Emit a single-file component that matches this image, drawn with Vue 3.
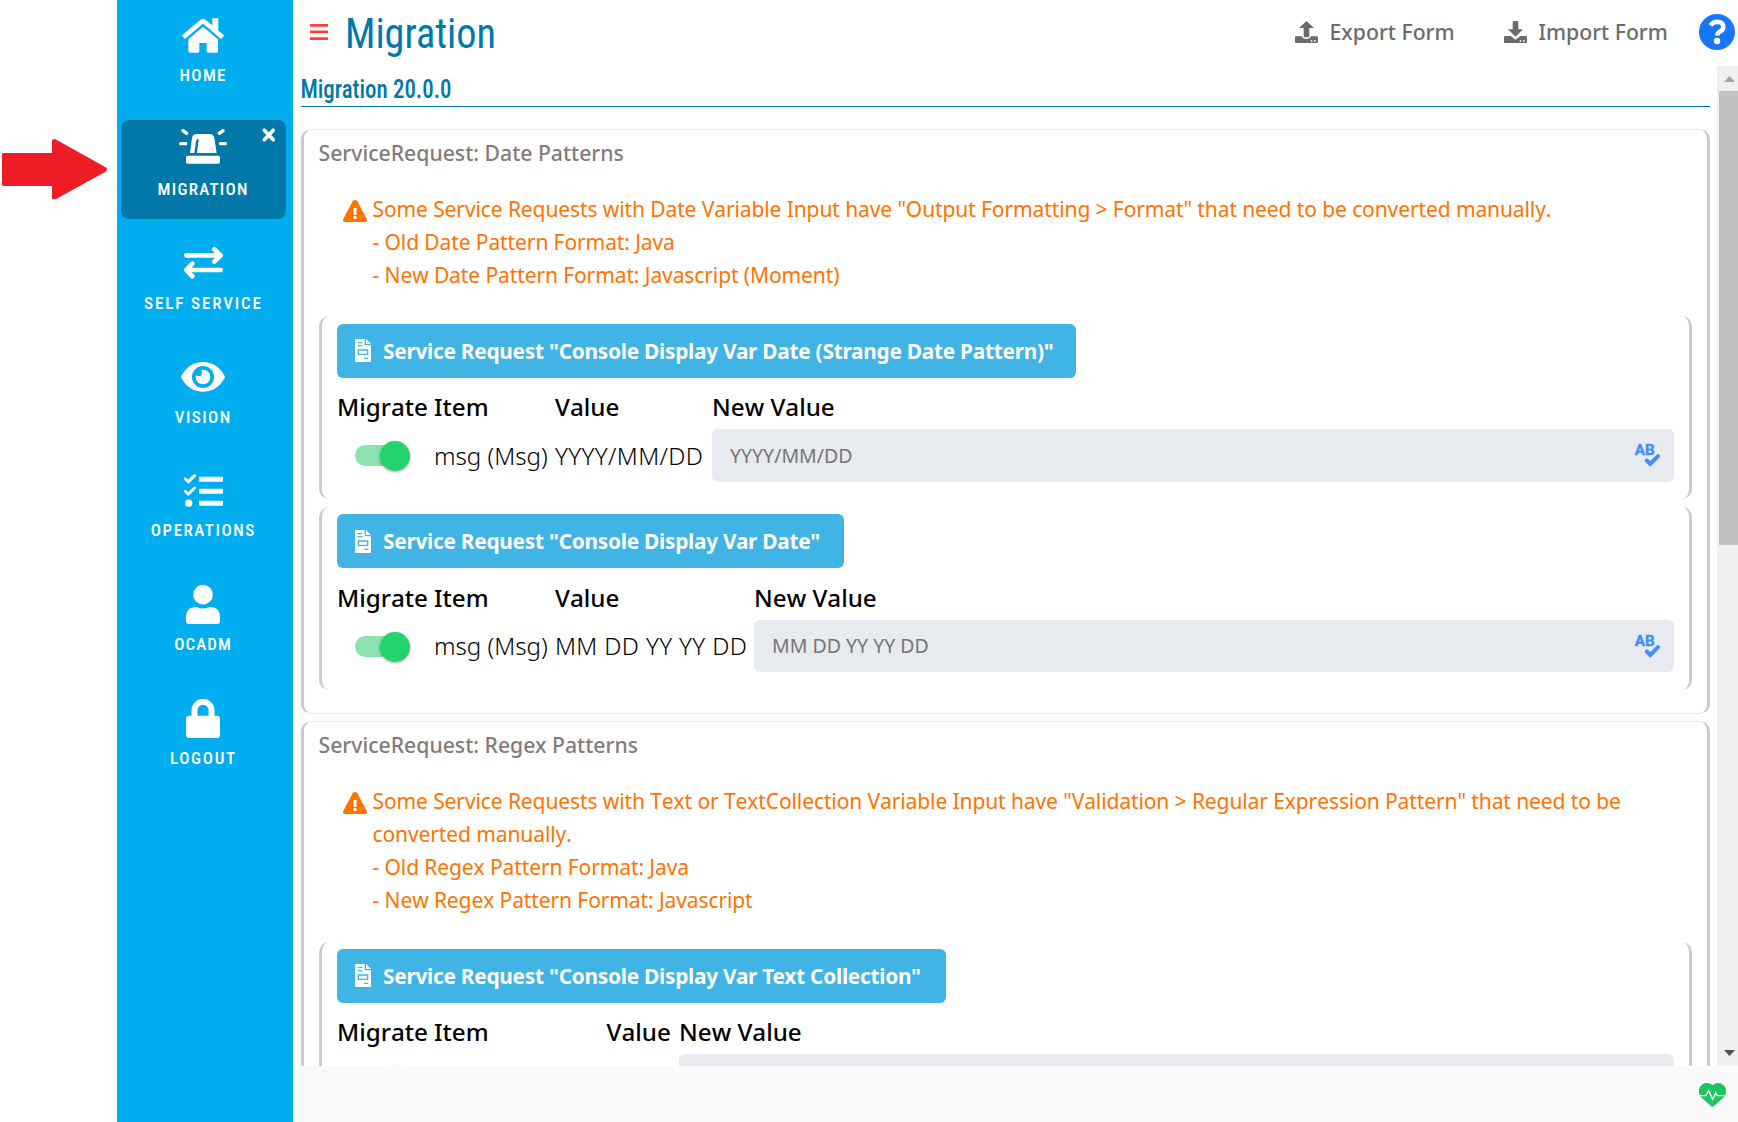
<script setup>
const nav = [
  { id: 'home', label: 'HOME', width: 46 },
  { id: 'migration', label: 'MIGRATION', width: 90, active: true },
  { id: 'self', label: 'SELF SERVICE', width: 117 },
  { id: 'vision', label: 'VISION', width: 55.5 },
  { id: 'operations', label: 'OPERATIONS', width: 103.5 },
  { id: 'user', label: 'OCADM', width: 56.5 },
  { id: 'logout', label: 'LOGOUT', width: 65 },
]

const sections = [
  {
    title: 'ServiceRequest: Date Patterns',
    lines: [
      'Some Service Requests with Date Variable Input have "Output Formatting > Format" that need to be converted manually.',
      '- Old Date Pattern Format: Java',
      '- New Date Pattern Format: Javascript (Moment)',
    ],
    requests: [
      {
        name: 'Service Request "Console Display Var Date (Strange Date Pattern)"',
        item: 'msg (Msg)', value: 'YYYY/MM/DD', columns: [97, 121, 157], width: 739,
      },
      {
        name: 'Service Request "Console Display Var Date"',
        item: 'msg (Msg)', value: 'MM DD YY YY DD', columns: [97, 121, 199], width: 507,
      },
    ],
  },
  {
    title: 'ServiceRequest: Regex Patterns',
    lines: [
      'Some Service Requests with Text or TextCollection Variable Input have "Validation > Regular Expression Pattern" that need to be converted manually.',
      '- Old Regex Pattern Format: Java',
      '- New Regex Pattern Format: Javascript',
    ],
    requests: [
      {
        name: 'Service Request "Console Display Var Text Collection"',
        item: '', value: '', columns: [97, 172.5, 72.5], width: 609,
      },
    ],
  },
]

const gridColumns = (r) => r.columns.map((c) => c + 'px').join(' ') + ' 1fr'
</script>

<template>
  <div class="page">
    <aside class="callout">
      <svg width="105" height="62" viewBox="0 0 105 62">
        <path d="M3 15H52V3Q52 1 55 1L106 29.500Q108 31.500 106 33.500L56 61Q52 62 52 60V48H3Q2 48 2 46V17Q2 15 3 15Z" fill="#ee1c24" />
      </svg>
    </aside>

    <nav class="sidebar">
      <a v-for="n in nav" :key="n.id" class="tile" :class="{ active: n.active }">
        <span class="glyph">
          <svg v-if="n.id === 'home'" width="44" height="35" viewBox="543 54 132 105" fill="#fff">
            <path d="M637 55H655V96L637 80Z" />
            <path d="M550 112L604 66Q609 62 614 66L668 112" fill="none" stroke="#fff" stroke-width="14" />
            <path d="M609 80L654 118V154Q654 158 650 158H624Q620 158 620 154V129H598V154Q598 158 594 158H569Q565 158 565 154V118Z" />
          </svg>
          <svg v-else-if="n.id === 'migration'" class="siren" width="48" height="35" viewBox="537 390 144 105" fill="#fff">
            <path d="M570 462L576 417Q578 405 590 405H630Q640 405 643 417L650 462Z" />
            <path d="M596 419L591 462H583L588 427Q589 419 596 419Z" fill="#0078a9" />
            <rect x="558" y="470" width="102" height="24" rx="5" />
            <path d="M542 434H557M661 434H676M549 395L560 403M669 395L658 403" stroke="#fff" stroke-width="10" stroke-linecap="round" />
          </svg>
          <svg v-else-if="n.id === 'self'" width="39" height="32" viewBox="552 743 117 96" fill="none" stroke="#fff" stroke-width="14" stroke-linecap="round" stroke-linejoin="round">
            <path d="M559 768H661M643 750L662 768L643 787M662 812H560M577 793L559 812L577 831" />
          </svg>
          <svg v-else-if="n.id === 'vision'" width="44" height="30" viewBox="213 98 132 90">
            <path d="M214 140Q237 98 279 98T344 140Q346 143 344 146Q321 187 279 187T214 146Q212 143 214 140Z" fill="#fff" />
            <circle cx="279" cy="143" r="33" fill="#00aeef" />
            <circle cx="279" cy="143" r="22" fill="#fff" />
            <circle cx="266" cy="130" r="10" fill="#00aeef" />
          </svg>
          <svg v-else-if="n.id === 'operations'" width="39" height="33" viewBox="222 433 117 99" fill="#fff">
            <path d="M267 443Q267 441 269 441H337Q339 441 339 443V454Q339 456 337 456H269Q267 456 267 454ZM267 479Q267 477 269 477H337Q339 477 339 479V490Q339 492 337 492H269Q267 492 267 490ZM267 515Q267 513 269 513H337Q339 513 339 515V526Q339 528 337 528H269Q267 528 267 526Z" />
            <circle cx="236" cy="520.500" r="11" />
            <path d="M226 448L235 456L254 438M226 485L235 493L254 475" fill="none" stroke="#fff" stroke-width="9" stroke-linecap="round" />
          </svg>
          <svg v-else-if="n.id === 'user'" width="34" height="39" viewBox="228 768 102 117" fill="#fff">
            <circle cx="279" cy="797" r="29.500" />
            <path d="M256 834H260Q279 843 298 834H302Q330 836 330 864V875Q330 885 320 885H238Q228 885 228 875V864Q228 836 256 834Z" />
          </svg>
          <svg v-else width="34" height="39" viewBox="228 1107 102 117">
            <rect x="228" y="1157" width="102" height="67" rx="10" fill="#fff" />
            <path d="M253.500 1160V1141A25.500 25.500 0 0 1 304.500 1141V1160" fill="none" stroke="#fff" stroke-width="18" />
          </svg>
        </span>
        <svg class="label" width="165" height="24">
          <text x="81.500" y="17" text-anchor="middle" :textLength="n.width">{{ n.label }}</text>
        </svg>
        <svg v-if="n.active" class="close" width="14" height="14" viewBox="0 0 14 14" stroke="#fff" stroke-width="3.700" stroke-linecap="round">
          <path d="M2.300 2.300L11.200 11.700M11.200 2.300L2.300 11.700" />
        </svg>
      </a>
    </nav>

    <section class="workspace">
      <header class="topbar">
        <svg class="burger" width="18" height="16" viewBox="0 0 18 16" fill="#f9423a">
          <path d="M0 0H18V2.700H0ZM0 6.500H18V9.200H0ZM0 13.200H18V16H0Z" />
        </svg>
        <svg class="heading" width="160" height="60">
          <text x="0" y="48" textLength="151" lengthAdjust="spacingAndGlyphs">Migration</text>
        </svg>
        <button class="action export">
          <svg width="23" height="22" viewBox="75 63 69 66" fill="#6b6b6b">
            <path d="M109.500 63L132 84H118V108Q118 112 114 112H105Q101 112 101 108V84H87Z" />
            <path d="M78 109H96Q98 117 109 117T122 109H141Q144 109 144 112V126Q144 129 141 129H78Q75 129 75 126V112Q75 109 78 109ZM122 121V125H127V121ZM132 121V125H137V121Z" fill-rule="evenodd" />
          </svg>
          <span>Export Form</span>
        </button>
        <button class="action import">
          <svg width="23" height="22" viewBox="702 63 69 66" fill="#6b6b6b">
            <path d="M732 63H741Q745 63 745 67V88H759L736.500 110L714 88H728V67Q728 63 732 63Z" />
            <path d="M705 108H722L736.500 119L751 108H768Q771 108 771 111V126Q771 129 768 129H705Q702 129 702 126V111Q702 108 705 108ZM749 121V125H754V121ZM759 121V125H764V121Z" fill-rule="evenodd" />
          </svg>
          <span>Import Form</span>
        </button>
        <svg class="help" width="36" height="36" viewBox="0 0 36 36">
          <circle cx="18" cy="18" r="18" fill="#1877f7" />
          <path d="M11.500 11.500Q14 7.800 18 7.800Q24.300 8 24.300 13Q24.300 15.500 21.500 17.300Q18.300 19 18.300 21.500" fill="none" stroke="#fff" stroke-width="4.600" />
          <circle cx="18" cy="27" r="3.200" fill="#fff" />
        </svg>
      </header>

      <div class="viewport">
        <div class="content">
          <h2 class="version">
            <svg width="170" height="40">
              <text x="-0.500" y="32" textLength="151" lengthAdjust="spacingAndGlyphs">Migration 20.0.0</text>
            </svg>
          </h2>

          <article v-for="s in sections" :key="s.title" class="card">
            <h3>{{ s.title }}</h3>
            <div class="warning">
              <svg width="24" height="22" viewBox="159 600 72 66">
                <path d="M188 604Q195 596 202 604L230 656Q233 666 224 666H166Q157 666 160 656Z" fill="#ff7300" />
                <path d="M190 624H200L199 645H191Z" fill="#fff" />
                <circle cx="195" cy="652.500" r="5" fill="#fff" />
              </svg>
              <p>
                <span v-for="l in s.lines" :key="l">{{ l }}</span>
              </p>
            </div>
            <div class="requests">
              <div v-for="r in s.requests" :key="r.name" class="request">
                <button class="open" :style="{ width: r.width + 'px' }">
                  <svg width="16" height="23" viewBox="0 0 48 69" fill="#fff">
                    <path d="M0 2Q0 0 2 0H29V19H48V67Q48 69 46 69H2Q0 69 0 67ZM8 9V13H22V9ZM8 18V22H22V18ZM8 31V48H40V31ZM12 35H36V44H12ZM27 56V60H40V56Z" fill-rule="evenodd" />
                    <path d="M33 0L48 15H33Z" />
                  </svg>
                  {{ r.name }}
                </button>
                <div class="grid head" :style="{ gridTemplateColumns: gridColumns(r) }">
                  <span>Migrate</span><span>Item</span><span>Value</span><span>New Value</span>
                </div>
                <div class="grid row" :style="{ gridTemplateColumns: gridColumns(r) }">
                  <span class="toggle"><i></i></span>
                  <span>{{ r.item }}</span>
                  <span class="value">{{ r.value }}</span>
                  <div class="field">
                    <span>{{ r.value }}</span>
                    <svg v-if="r.value" class="check" width="27" height="26" viewBox="0 0 27 26">
                      <text x="0.800" y="13.200" textLength="20" lengthAdjust="spacingAndGlyphs">AB</text>
                      <path d="M12.800 18.500L16.300 22L24 14.200" fill="none" stroke="#4190f7" stroke-width="4" stroke-linecap="round" />
                    </svg>
                  </div>
                </div>
              </div>
            </div>
          </article>
        </div>

        <div class="scrollbar">
          <svg width="11" height="6" viewBox="0 0 11 6"><path d="M0 6L5.500 0L11 6Z" fill="#a3a3a3" /></svg>
          <div class="thumb"></div>
          <svg class="down" width="11" height="6" viewBox="0 0 11 6"><path d="M0 0H11L5.500 6Z" fill="#505050" /></svg>
        </div>
      </div>

      <footer class="status">
        <svg width="27" height="24" viewBox="417 487 81 72">
          <path d="M457.500 494Q467 484 482 488Q502 497 497 520Q495 527 489 532L461 557Q457.500 560 454 557L426 532Q420 527 418 520Q413 497 433 488Q448 484 457.500 494Z" fill="#1dc55e" />
          <path d="M417 525H438L446 510L458 536L467 516L472 525H498" fill="none" stroke="#fafafa" stroke-width="4" />
        </svg>
      </footer>
    </section>
  </div>
</template>

<style>
body { background: #fff; }
</style>

<style scoped>
.page {
  display: flex;
  width: 1738px;
  height: 1122px;
  overflow: hidden;
  font-family: "Noto Sans", "Open Sans", sans-serif;
  color: #000;
}
svg { display: block; flex: none; }
.callout { width: 117px; padding-top: 138px; box-sizing: border-box; flex: none; }
.callout svg { overflow: visible; }

.sidebar {
  width: 176px;
  flex: none;
  box-sizing: border-box;
  padding: 6px 7px 0 4px;
  background: #00aeef;
}
.tile {
  position: relative;
  display: flex;
  flex-direction: column;
  align-items: center;
  height: 99px;
  margin-bottom: 14.850px;
  border-radius: 8px;
}
.tile.active { background: #0078a9; }
.glyph { display: flex; align-items: center; justify-content: center; height: 58px; margin-right: 1px; }
.siren { margin-top: -4px; }
.label text {
  font: 500 17px "Roboto Condensed", Roboto, sans-serif;
  fill: #fff;
}
.close { position: absolute; top: 8.500px; right: 10.500px; }

.workspace { flex: 1; min-width: 0; display: flex; flex-direction: column; }
.topbar { display: flex; align-items: center; height: 66px; flex: none; }
.burger { margin: 0 16.500px 2px 17px; }
.heading { margin-bottom: 6px; }
.heading text, .version text {
  font: 380 42px "Roboto Condensed", Roboto, sans-serif;
  fill: #0078a9;
}
.action, .open { border: 0; font-family: inherit; display: flex; align-items: center; white-space: nowrap; }
.action {
  padding: 0;
  gap: 11.500px;
  background: none;
  font-size: 21.200px;
  font-weight: 500;
  color: #6b6b6b;
  height: 30px;
  margin-bottom: 2px;
}
.action span { padding-bottom: 2px; }
.export { margin-left: auto; width: 209px; }
.import { width: 195px; }
.help { margin-right: 3px; margin-bottom: 2px; }

.viewport { display: flex; height: 1000px; flex: none; overflow: hidden; }
.content { width: 1409px; padding-left: 8px; flex: none; }
.version { margin: 0 0 22px; height: 40px; border-bottom: 1px solid #0078a9; }
.version svg { overflow: visible; }
.version text { font-size: 25.500px; font-weight: 480; }

.card {
  box-sizing: border-box;
  border: solid #ccc;
  border-width: 1px 3px;
  border-top-color: #e8e8e8;
  border-bottom-color: #e8e8e8;
  border-radius: 10px;
  padding: 0 15px 23.300px;
  margin-bottom: 7.300px;
}
h3 {
  margin: 0 0 0 -.5px;
  padding: 7px 0 0;
  height: 55px;
  box-sizing: border-box;
  font-size: 21.200px;
  line-height: 32px;
  font-weight: 500;
  color: #857b7b;
}
.warning { display: flex; gap: 5.500px; padding: 7.500px 0 0 24px; color: #ff7300; }
.warning svg { margin-top: 7.400px; }
.warning p {
  margin: 0;
  width: 1270px;
  font-size: 21px;
  line-height: 33px;
  letter-spacing: -.1px;
  font-kerning: none;
}
.warning p span { display: block; }

.requests { display: flex; flex-direction: column; gap: 8px; margin-top: 24.800px; }
.request {
  box-sizing: border-box;
  height: 182.700px;
  border: solid #ccc;
  border-width: 0 3px;
  border-radius: 10px;
  padding: 7.400px 15px 0;
}
.open {
  height: 54px;
  padding: 0 0 0 18px;
  gap: 12px;
  border-radius: 6px;
  background: #41b4e6;
  color: #fff;
  font-size: 20.830px;
  font-weight: 700;
  letter-spacing: -.26px;
}
.grid { display: grid; align-items: center; white-space: nowrap; }
.head {
  height: 51.200px;
  padding-top: 7.500px;
  box-sizing: border-box;
  font-size: 24.200px;
  font-weight: 500;
  line-height: 34px;
  font-kerning: none;
}
.row { height: 52.700px; font-size: 24.100px; font-weight: 300; }
.value { letter-spacing: .35px; font-kerning: none; }
.toggle {
  position: relative;
  width: 50px;
  height: 21px;
  margin: 1px 0 0 18px;
  border-radius: 11px;
  background: #8ce2b0;
}
.toggle i {
  position: absolute;
  right: -5px;
  top: -4.300px;
  width: 30px;
  height: 30px;
  border-radius: 50%;
  background: #22d46b;
  box-shadow: 0 1px 3px rgba(0, 0, 0, .35);
}
.field {
  display: flex;
  align-items: center;
  justify-content: space-between;
  height: 100%;
  box-sizing: border-box;
  padding: 0 13px 0 18px;
  border-radius: 6px;
  background: #e7eaef;
  color: #757575;
  font-size: 19.500px;
  font-weight: 400;
}
.check { overflow: visible; }
.field text { font: 700 15.500px Roboto, sans-serif; fill: #4190f7; stroke: #4190f7; stroke-width: .4px; }

.scrollbar {
  width: 21px;
  margin-left: 7px;
  flex: none;
  display: flex;
  flex-direction: column;
  align-items: flex-start;
  box-sizing: border-box;
  padding: 10px 0;
  background: #f0f0f0;
}
.scrollbar svg { margin-left: 7px; }
.thumb { width: 19px; height: 454px; margin: 9px 0 0 2px; background: #c1c1c1; }
.scrollbar .down { margin-top: auto; }

.status { flex: 1; display: flex; justify-content: flex-end; padding: 16.500px 12px 0 0; background: #fafafa; }
</style>
